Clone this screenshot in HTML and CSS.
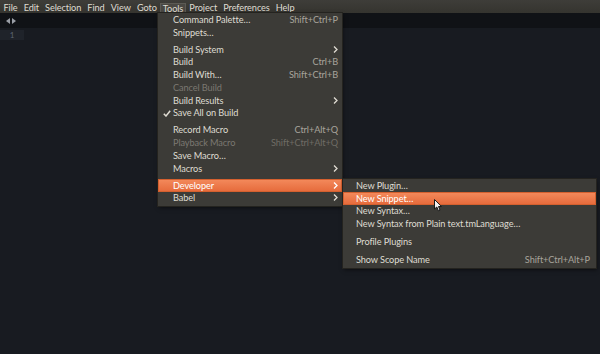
FILE: index.html
```html
<!DOCTYPE html>
<html lang="en">

<head>
    <meta charset="UTF-8">
    <meta name="viewport" content="width=device-width, initial-scale=1.0">
    <title>Sublime Text - Tools menu</title>
    <link rel="stylesheet" href="styles.css">
</head>

<body>
    <div class="menubar">
        <span class="menubar-item">File</span>
        <span class="menubar-item">Edit</span>
        <span class="menubar-item">Selection</span>
        <span class="menubar-item">Find</span>
        <span class="menubar-item">View</span>
        <span class="menubar-item">Goto</span>
        <span class="menubar-item active">Tools</span>
        <span class="menubar-item">Project</span>
        <span class="menubar-item">Preferences</span>
        <span class="menubar-item">Help</span>
    </div>

    <div class="editor">
        <div class="tabbar">
            <svg class="tab-arrows" width="10" height="6" viewBox="0 0 10 6">
                <path d="M4 0 L4 6 L0 3 Z" fill="#9a9ea6"/>
                <path d="M6 0 L6 6 L10 3 Z" fill="#9a9ea6"/>
            </svg>
        </div>
        <div class="code">
            <div class="line current">
                <span class="gutter">1</span>
            </div>
        </div>
    </div>

    <div class="menu tools-menu">
        <div class="item"><span class="label">Command Palette…</span><span class="key">Shift+Ctrl+P</span></div>
        <div class="item"><span class="label">Snippets…</span></div>
        <div class="sep"></div>
        <div class="item"><span class="label">Build System</span><svg class="arrow" width="5" height="7" viewBox="0 0 5 7"><path d="M1 0.5 L4 3.5 L1 6.5" fill="none" stroke="#dfdbd2" stroke-width="1.3"/></svg></div>
        <div class="item"><span class="label">Build</span><span class="key">Ctrl+B</span></div>
        <div class="item"><span class="label">Build With…</span><span class="key">Shift+Ctrl+B</span></div>
        <div class="item disabled"><span class="label">Cancel Build</span></div>
        <div class="item"><span class="label">Build Results</span><svg class="arrow" width="5" height="7" viewBox="0 0 5 7"><path d="M1 0.5 L4 3.5 L1 6.5" fill="none" stroke="#dfdbd2" stroke-width="1.3"/></svg></div>
        <div class="item"><svg class="check" width="8" height="7" viewBox="0 0 8 7"><path d="M0.8 3.8 L3 6 L7.2 0.8" fill="none" stroke="#dfdbd2" stroke-width="1.5"/></svg><span class="label">Save All on Build</span></div>
        <div class="sep"></div>
        <div class="item"><span class="label">Record Macro</span><span class="key">Ctrl+Alt+Q</span></div>
        <div class="item disabled"><span class="label">Playback Macro</span><span class="key">Shift+Ctrl+Alt+Q</span></div>
        <div class="item"><span class="label">Save Macro…</span></div>
        <div class="item"><span class="label">Macros</span><svg class="arrow" width="5" height="7" viewBox="0 0 5 7"><path d="M1 0.5 L4 3.5 L1 6.5" fill="none" stroke="#dfdbd2" stroke-width="1.3"/></svg></div>
        <div class="sep"></div>
        <div class="item selected"><span class="label">Developer</span><svg class="arrow" width="5" height="7" viewBox="0 0 5 7"><path d="M1 0.5 L4 3.5 L1 6.5" fill="none" stroke="#ffffff" stroke-width="1.3"/></svg></div>
        <div class="item"><span class="label">Babel</span><svg class="arrow" width="5" height="7" viewBox="0 0 5 7"><path d="M1 0.5 L4 3.5 L1 6.5" fill="none" stroke="#dfdbd2" stroke-width="1.3"/></svg></div>
    </div>

    <div class="menu sub-menu">
        <div class="item"><span class="label">New Plugin…</span></div>
        <div class="item selected"><span class="label">New Snippet…</span></div>
        <div class="item"><span class="label">New Syntax…</span></div>
        <div class="item"><span class="label">New Syntax from Plain text.tmLanguage…</span></div>
        <div class="sep"></div>
        <div class="item"><span class="label">Profile Plugins</span></div>
        <div class="sep"></div>
        <div class="item"><span class="label">Show Scope Name</span><span class="key">Shift+Ctrl+Alt+P</span></div>
    </div>

    <svg class="pointer" width="9" height="13" viewBox="0 0 9 13">
        <path d="M0.5 0.5 L0.5 10 L2.8 8 L4.4 11.8 L6 11.1 L4.5 7.5 L7.6 7.5 Z" fill="#f2f2f2" stroke="#1a1a1a" stroke-width="1"/>
    </svg>
</body>

</html>
```

FILE: styles.css
```css
* {
    padding: 0;
    margin: 0;
    box-sizing: border-box;
}

body {
    width: 600px;
    height: 354px;
    overflow: hidden;
    background-color: #181b21;
    font-family: Lato, "Open Sans", sans-serif;
    font-size: 9.2px;
    letter-spacing: -0.1px;
    color: #dfdbd2;
    position: relative;
}

.menubar {
    height: 13px;
    display: flex;
    align-items: flex-end;
    padding-left: 0.5px;
    background: linear-gradient(#3e3d39, #35342f);
}

.menubar-item {
    height: 10px;
    line-height: 9px;
    padding: 0 3.05px;
}

.menubar-item.active {
    background-color: #4a4843;
    border: 1px solid #5c5a54;
    border-bottom: none;
    padding: 0 2.05px;
}

.editor {
    height: 341px;
}

.tabbar {
    height: 15px;
    background-color: #101216;
    display: flex;
    align-items: center;
    padding-left: 6px;
}

.code {
    padding-top: 2px;
}

.line {
    height: 10px;
    display: flex;
    align-items: center;
}

.gutter {
    width: 24px;
    height: 10px;
    line-height: 10px;
    text-align: center;
    color: #5d6573;
    font-size: 8px;
}

.line.current .gutter {
    background-color: #1f232a;
}

.menu {
    position: absolute;
    background-color: #3c3b37;
    box-shadow: 0 0 0 1px #24231f, 1px 2px 4px rgba(0, 0, 0, 0.5);
    padding-bottom: 1.5px;
}

.tools-menu {
    left: 158px;
    top: 13px;
    width: 184px;
}

.sub-menu {
    left: 343px;
    top: 179px;
    width: 253px;
    padding-bottom: 2px;
}

.item {
    height: 12.75px;
    display: flex;
    align-items: center;
    padding: 0 4px 0 15px;
    position: relative;
    white-space: nowrap;
}

.sub-menu .item {
    padding: 0 6px 0 13px;
}

.label {
    flex: 1;
}

.key {
    color: #a8a49c;
}

.check {
    position: absolute;
    left: 5px;
    top: 3px;
}

.item.disabled {
    color: #7b7871;
}

.item.disabled .key {
    color: #6f6c65;
}

.item.selected {
    background: linear-gradient(#f48b5d, #e5693a);
    box-shadow: inset 0 0 0 1px #d4602f;
    color: #ffffff;
}

.sep {
    height: 4.25px;
}

.sub-menu .sep {
    height: 5px;
}

.pointer {
    position: absolute;
    left: 434px;
    top: 199px;
}
```
